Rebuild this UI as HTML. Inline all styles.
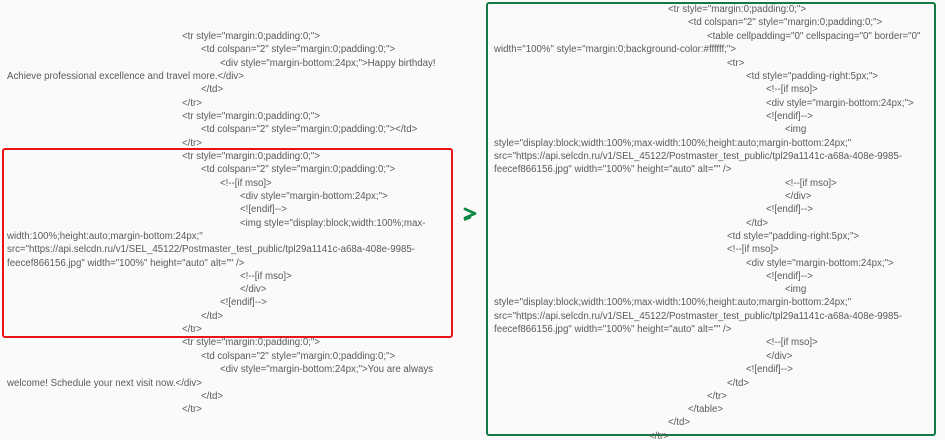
<!DOCTYPE html>
<html><head><meta charset="utf-8"><style>
html,body{margin:0;padding:0;width:945px;height:440px;overflow:hidden;background:#fafafa;}
body{position:relative;font-family:"Liberation Sans",sans-serif;font-size:9.7px;color:#5a5a5a;}
.l{position:absolute;white-space:pre;line-height:13px;}
.box{position:absolute;border-radius:3px;}
</style></head><body>
<div class="box" style="left:2px;top:148px;width:447px;height:186px;border:2px solid #e8141a;"></div>
<div class="box" style="left:486px;top:2px;width:446px;height:430px;border:2px solid #137a45;"></div>
<svg style="position:absolute;left:462px;top:206px" width="16" height="16" viewBox="0 0 16 16"><path d="M3 3 L13 7.5 L3 12" fill="none" stroke="#0f8a45" stroke-width="2.8" stroke-linejoin="round" stroke-linecap="round"/><path d="M3 13.5 L8 11.5" stroke="#0f8a45" stroke-width="2.4" stroke-linecap="round"/></svg>

<div class="l" style="left:182px;top:30px">&lt;tr style="margin:0;padding:0;"&gt;</div>
<div class="l" style="left:201px;top:43px">&lt;td colspan="2" style="margin:0;padding:0;"&gt;</div>
<div class="l" style="left:220px;top:57px">&lt;div style="margin-bottom:24px;"&gt;Happy birthday!</div>
<div class="l" style="left:7px;top:70px">Achieve professional excellence and travel more.&lt;/div&gt;</div>
<div class="l" style="left:201px;top:83px">&lt;/td&gt;</div>
<div class="l" style="left:182px;top:97px">&lt;/tr&gt;</div>
<div class="l" style="left:182px;top:110px">&lt;tr style="margin:0;padding:0;"&gt;</div>
<div class="l" style="left:201px;top:123px">&lt;td colspan="2" style="margin:0;padding:0;"&gt;&lt;/td&gt;</div>
<div class="l" style="left:182px;top:137px">&lt;/tr&gt;</div>
<div class="l" style="left:182px;top:150px">&lt;tr style="margin:0;padding:0;"&gt;</div>
<div class="l" style="left:201px;top:163px">&lt;td colspan="2" style="margin:0;padding:0;"&gt;</div>
<div class="l" style="left:220px;top:177px">&lt;!--[if mso]&gt;</div>
<div class="l" style="left:240px;top:190px">&lt;div style="margin-bottom:24px;"&gt;</div>
<div class="l" style="left:240px;top:203px">&lt;![endif]--&gt;</div>
<div class="l" style="left:240px;top:217px">&lt;img style="display:block;width:100%;max-</div>
<div class="l" style="left:7px;top:230px">width:100%;height:auto;margin-bottom:24px;"</div>
<div class="l" style="left:7px;top:243px">src="https://api.selcdn.ru/v1/SEL_45122/Postmaster_test_public/tpl29a1141c-a68a-408e-9985-</div>
<div class="l" style="left:7px;top:257px">feecef866156.jpg" width="100%" height="auto" alt="" /&gt;</div>
<div class="l" style="left:240px;top:270px">&lt;!--[if mso]&gt;</div>
<div class="l" style="left:240px;top:283px">&lt;/div&gt;</div>
<div class="l" style="left:220px;top:296px">&lt;![endif]--&gt;</div>
<div class="l" style="left:201px;top:310px">&lt;/td&gt;</div>
<div class="l" style="left:182px;top:323px">&lt;/tr&gt;</div>
<div class="l" style="left:182px;top:336px">&lt;tr style="margin:0;padding:0;"&gt;</div>
<div class="l" style="left:201px;top:350px">&lt;td colspan="2" style="margin:0;padding:0;"&gt;</div>
<div class="l" style="left:220px;top:363px">&lt;div style="margin-bottom:24px;"&gt;You are always</div>
<div class="l" style="left:7px;top:377px">welcome! Schedule your next visit now.&lt;/div&gt;</div>
<div class="l" style="left:201px;top:390px">&lt;/td&gt;</div>
<div class="l" style="left:182px;top:403px">&lt;/tr&gt;</div>

<div class="l" style="left:668px;top:3px">&lt;tr style="margin:0;padding:0;"&gt;</div>
<div class="l" style="left:688px;top:16px">&lt;td colspan="2" style="margin:0;padding:0;"&gt;</div>
<div class="l" style="left:707px;top:30px">&lt;table cellpadding="0" cellspacing="0" border="0"</div>
<div class="l" style="left:494px;top:43px">width="100%" style="margin:0;background-color:#ffffff;"&gt;</div>
<div class="l" style="left:727px;top:57px">&lt;tr&gt;</div>
<div class="l" style="left:746px;top:70px">&lt;td style="padding-right:5px;"&gt;</div>
<div class="l" style="left:766px;top:83px">&lt;!--[if mso]&gt;</div>
<div class="l" style="left:766px;top:97px">&lt;div style="margin-bottom:24px;"&gt;</div>
<div class="l" style="left:766px;top:110px">&lt;![endif]--&gt;</div>
<div class="l" style="left:785px;top:123px">&lt;img</div>
<div class="l" style="left:494px;top:137px">style="display:block;width:100%;max-width:100%;height:auto;margin-bottom:24px;"</div>
<div class="l" style="left:494px;top:150px">src="https://api.selcdn.ru/v1/SEL_45122/Postmaster_test_public/tpl29a1141c-a68a-408e-9985-</div>
<div class="l" style="left:494px;top:163px">feecef866156.jpg" width="100%" height="auto" alt="" /&gt;</div>
<div class="l" style="left:785px;top:177px">&lt;!--[if mso]&gt;</div>
<div class="l" style="left:785px;top:190px">&lt;/div&gt;</div>
<div class="l" style="left:766px;top:203px">&lt;![endif]--&gt;</div>
<div class="l" style="left:746px;top:217px">&lt;/td&gt;</div>
<div class="l" style="left:727px;top:230px">&lt;td style="padding-right:5px;"&gt;</div>
<div class="l" style="left:727px;top:243px">&lt;!--[if mso]&gt;</div>
<div class="l" style="left:746px;top:257px">&lt;div style="margin-bottom:24px;"&gt;</div>
<div class="l" style="left:766px;top:270px">&lt;![endif]--&gt;</div>
<div class="l" style="left:785px;top:283px">&lt;img</div>
<div class="l" style="left:494px;top:296px">style="display:block;width:100%;max-width:100%;height:auto;margin-bottom:24px;"</div>
<div class="l" style="left:494px;top:310px">src="https://api.selcdn.ru/v1/SEL_45122/Postmaster_test_public/tpl29a1141c-a68a-408e-9985-</div>
<div class="l" style="left:494px;top:323px">feecef866156.jpg" width="100%" height="auto" alt="" /&gt;</div>
<div class="l" style="left:766px;top:336px">&lt;!--[if mso]&gt;</div>
<div class="l" style="left:766px;top:350px">&lt;/div&gt;</div>
<div class="l" style="left:746px;top:363px">&lt;![endif]--&gt;</div>
<div class="l" style="left:727px;top:377px">&lt;/td&gt;</div>
<div class="l" style="left:707px;top:390px">&lt;/tr&gt;</div>
<div class="l" style="left:688px;top:403px">&lt;/table&gt;</div>
<div class="l" style="left:668px;top:416px">&lt;/td&gt;</div>
<div class="l" style="left:649px;top:430px">&lt;/tr&gt;</div>
</body></html>
